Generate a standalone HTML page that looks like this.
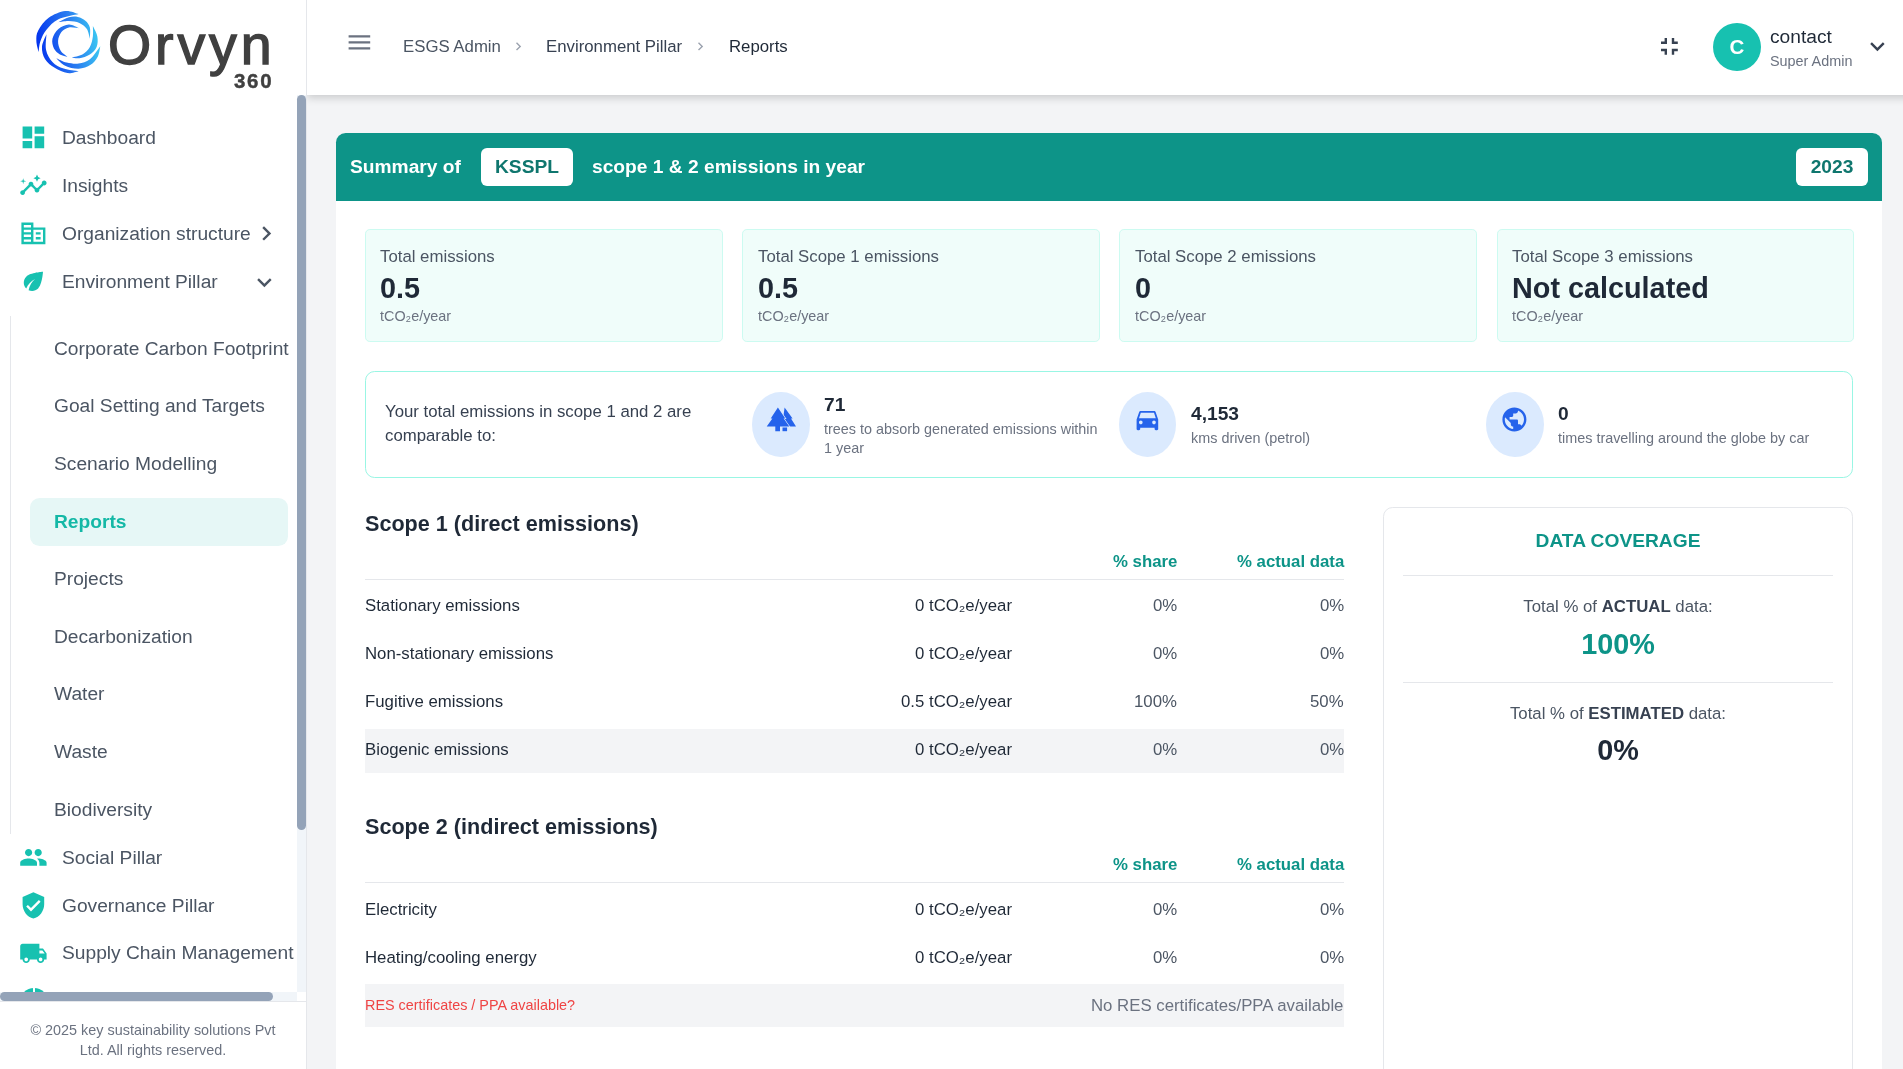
<!DOCTYPE html>
<html><head><meta charset="utf-8"><style>
html,body{margin:0;padding:0;width:1903px;height:1069px;overflow:hidden;background:#f3f4f6;font-family:"Liberation Sans", sans-serif;}
.t{position:absolute;line-height:1;white-space:nowrap;will-change:transform;}
.r{position:absolute;}
b{font-weight:bold;color:#374151;}
</style></head><body>
<div class="r" style="left:336.00px;top:133.00px;width:1546.00px;height:946.00px;background:#fff;border-radius:9.6px 9.6px 0 0;"></div>
<div class="r" style="left:336.00px;top:133.00px;width:1546.00px;height:68.00px;background:#0d9488;border-radius:9.6px 9.6px 0 0;"></div>
<div class="t" style="left:349.50px;top:157.40px;font-size:19.2px;color:#fff;font-weight:bold;">Summary of</div>
<div class="r" style="left:481.00px;top:148.00px;width:92.00px;height:38.00px;background:#fff;border-radius:6px;"></div>
<div class="t" style="left:481.00px;width:92px;top:157.40px;font-size:19.2px;color:#0f766e;text-align:center;font-weight:bold;">KSSPL</div>
<div class="t" style="left:591.50px;top:157.40px;font-size:19.2px;color:#fff;font-weight:bold;">scope 1 &amp; 2 emissions in year</div>
<div class="r" style="left:1796.00px;top:148.00px;width:72.00px;height:38.00px;background:#fff;border-radius:6px;"></div>
<div class="t" style="left:1796.00px;width:72px;top:157.40px;font-size:19.2px;color:#0f766e;text-align:center;font-weight:bold;">2023</div>
<div class="r" style="left:365.00px;top:229.20px;width:357.60px;height:112.60px;background:#f0fdfa;border:1px solid #ccfbf1;border-radius:4.8px;box-sizing:border-box;"></div>
<div class="t" style="left:380.40px;top:248.60px;font-size:16.8px;color:#4b5563;">Total emissions</div>
<div class="t" style="left:380.40px;top:274.10px;font-size:28.8px;color:#1f2937;font-weight:bold;">0.5</div>
<div class="t" style="left:380.40px;top:309.30px;font-size:14.4px;color:#6b7280;">tCO₂e/year</div>
<div class="r" style="left:742.20px;top:229.20px;width:357.60px;height:112.60px;background:#f0fdfa;border:1px solid #ccfbf1;border-radius:4.8px;box-sizing:border-box;"></div>
<div class="t" style="left:757.60px;top:248.60px;font-size:16.8px;color:#4b5563;">Total Scope 1 emissions</div>
<div class="t" style="left:757.60px;top:274.10px;font-size:28.8px;color:#1f2937;font-weight:bold;">0.5</div>
<div class="t" style="left:757.60px;top:309.30px;font-size:14.4px;color:#6b7280;">tCO₂e/year</div>
<div class="r" style="left:1119.40px;top:229.20px;width:357.60px;height:112.60px;background:#f0fdfa;border:1px solid #ccfbf1;border-radius:4.8px;box-sizing:border-box;"></div>
<div class="t" style="left:1134.80px;top:248.60px;font-size:16.8px;color:#4b5563;">Total Scope 2 emissions</div>
<div class="t" style="left:1134.80px;top:274.10px;font-size:28.8px;color:#1f2937;font-weight:bold;">0</div>
<div class="t" style="left:1134.80px;top:309.30px;font-size:14.4px;color:#6b7280;">tCO₂e/year</div>
<div class="r" style="left:1496.60px;top:229.20px;width:357.60px;height:112.60px;background:#f0fdfa;border:1px solid #ccfbf1;border-radius:4.8px;box-sizing:border-box;"></div>
<div class="t" style="left:1512.00px;top:248.60px;font-size:16.8px;color:#4b5563;">Total Scope 3 emissions</div>
<div class="t" style="left:1512.00px;top:274.10px;font-size:28.8px;color:#1f2937;font-weight:bold;">Not calculated</div>
<div class="t" style="left:1512.00px;top:309.30px;font-size:14.4px;color:#6b7280;">tCO₂e/year</div>
<div class="r" style="left:365.00px;top:371.00px;width:1488.00px;height:106.50px;background:#fff;border:1px solid #99f6e4;border-radius:9.6px;box-sizing:border-box;"></div>
<div class="t" style="left:384.60px;top:403.60px;font-size:16.8px;color:#374151;">Your total emissions in scope 1 and 2 are</div>
<div class="t" style="left:384.60px;top:427.60px;font-size:16.8px;color:#374151;">comparable to:</div>
<div class="r" style="left:752.2px;top:391.8px;width:57.6px;height:65.2px;background:#dbeafe;border-radius:50%;"></div>
<svg class="r" style="left:766.6px;top:406.2px;width:28.8px;height:28.8px;overflow:visible" viewBox="0 0 28.8 28.8" fill="#2563eb"><path d="M17.6 1.6 L25.6 12.4 L24 12.4 L29 20.5 L15 20.5 Z"/><path d="M15.5 21.3 H20.1 V25.2 H15.5 Z"/><path stroke="#dbeafe" stroke-width="1.3" paint-order="stroke" d="M10.9 1.6 L18.3 12.4 L16.6 12.4 L22.3 20.5 L13 20.5 L13 25.2 L8.3 25.2 L8.3 20.5 L-0.3 20.5 L5.4 12.4 L3.7 12.4 Z"/></svg>
<div class="t" style="left:824.20px;top:395.40px;font-size:19.2px;color:#1f2937;font-weight:bold;">71</div>
<div class="t" style="left:824.20px;top:422.30px;font-size:14.4px;color:#6b7280;">trees to absorb generated emissions within</div>
<div class="t" style="left:824.20px;top:441.30px;font-size:14.4px;color:#6b7280;">1 year</div>
<div class="r" style="left:1118.8px;top:391.8px;width:57.6px;height:65.2px;background:#dbeafe;border-radius:50%;"></div>
<svg class="r" style="left:1133.20px;top:405.00px;width:28.8px;height:28.8px" viewBox="0 0 24 24" fill="#2563eb"><path d="M18.92 6.01C18.72 5.42 18.16 5 17.5 5h-11c-.66 0-1.21.42-1.42 1.01L3 12v8c0 .55.45 1 1 1h1c.55 0 1-.45 1-1v-1h12v1c0 .55.45 1 1 1h1c.55 0 1-.45 1-1v-8l-2.08-5.99zM6.5 16c-.83 0-1.5-.67-1.5-1.5S5.67 13 6.5 13s1.5.67 1.5 1.5S7.33 16 6.5 16zm11 0c-.83 0-1.5-.67-1.5-1.5s.67-1.5 1.5-1.5 1.5.67 1.5 1.5-.67 1.5-1.5 1.5zM5 11l1.5-4.5h11L19 11H5z"/></svg>
<div class="t" style="left:1190.80px;top:404.40px;font-size:19.2px;color:#1f2937;font-weight:bold;">4,153</div>
<div class="t" style="left:1190.80px;top:431.30px;font-size:14.4px;color:#6b7280;">kms driven (petrol)</div>
<div class="r" style="left:1486px;top:391.8px;width:57.6px;height:65.2px;background:#dbeafe;border-radius:50%;"></div>
<svg class="r" style="left:1500.40px;top:404.70px;width:28.8px;height:28.8px" viewBox="0 0 24 24" fill="#2563eb"><path d="M12 2C6.48 2 2 6.48 2 12s4.48 10 10 10 10-4.48 10-10S17.52 2 12 2zm-1 17.93c-3.95-.49-7-3.85-7-7.930 0-.62.08-1.21.21-1.79L9 15v1c0 1.1.9 2 2 2v1.93zm6.9-2.54c-.26-.81-1-1.39-1.9-1.39h-1v-3c0-.55-.45-1-1-1H8v-2h2c.55 0 1-.45 1-1V7h2c1.1 0 2-.9 2-2v-.41c2.93 1.19 5 4.06 5 7.41 0 2.080-.8 3.97-2.1 5.39z"/></svg>
<div class="t" style="left:1558.00px;top:404.40px;font-size:19.2px;color:#1f2937;font-weight:bold;">0</div>
<div class="t" style="left:1558.00px;top:431.30px;font-size:14.4px;color:#6b7280;">times travelling around the globe by car</div>
<div class="t" style="left:364.50px;top:513.20px;font-size:21.6px;color:#1f2937;font-weight:bold;">Scope 1 (direct emissions)</div>
<div class="t" style="right:725.60px;top:553.60px;font-size:16.8px;color:#0d9488;text-align:right;font-weight:bold;">% share</div>
<div class="t" style="right:559.20px;top:553.60px;font-size:16.8px;color:#0d9488;text-align:right;font-weight:bold;">% actual data</div>
<div class="r" style="left:365.00px;top:579.00px;width:979.00px;height:1.00px;background:#e5e7eb;"></div>
<div class="t" style="left:365.00px;top:597.60px;font-size:16.8px;color:#1f2937;">Stationary emissions</div>
<div class="t" style="right:891.50px;top:597.60px;font-size:16.8px;color:#1f2937;text-align:right;">0 tCO₂e/year</div>
<div class="t" style="right:725.60px;top:597.60px;font-size:16.8px;color:#4b5563;text-align:right;">0%</div>
<div class="t" style="right:559.20px;top:597.60px;font-size:16.8px;color:#4b5563;text-align:right;">0%</div>
<div class="t" style="left:365.00px;top:645.60px;font-size:16.8px;color:#1f2937;">Non-stationary emissions</div>
<div class="t" style="right:891.50px;top:645.60px;font-size:16.8px;color:#1f2937;text-align:right;">0 tCO₂e/year</div>
<div class="t" style="right:725.60px;top:645.60px;font-size:16.8px;color:#4b5563;text-align:right;">0%</div>
<div class="t" style="right:559.20px;top:645.60px;font-size:16.8px;color:#4b5563;text-align:right;">0%</div>
<div class="t" style="left:365.00px;top:693.60px;font-size:16.8px;color:#1f2937;">Fugitive emissions</div>
<div class="t" style="right:891.50px;top:693.60px;font-size:16.8px;color:#1f2937;text-align:right;">0.5 tCO₂e/year</div>
<div class="t" style="right:725.60px;top:693.60px;font-size:16.8px;color:#4b5563;text-align:right;">100%</div>
<div class="t" style="right:559.20px;top:693.60px;font-size:16.8px;color:#4b5563;text-align:right;">50%</div>
<div class="r" style="left:365.00px;top:729.40px;width:979.00px;height:43.20px;background:#f3f4f6;"></div>
<div class="t" style="left:365.00px;top:741.60px;font-size:16.8px;color:#1f2937;">Biogenic emissions</div>
<div class="t" style="right:891.50px;top:741.60px;font-size:16.8px;color:#1f2937;text-align:right;">0 tCO₂e/year</div>
<div class="t" style="right:725.60px;top:741.60px;font-size:16.8px;color:#4b5563;text-align:right;">0%</div>
<div class="t" style="right:559.20px;top:741.60px;font-size:16.8px;color:#4b5563;text-align:right;">0%</div>
<div class="t" style="left:364.50px;top:816.20px;font-size:21.6px;color:#1f2937;font-weight:bold;">Scope 2 (indirect emissions)</div>
<div class="t" style="right:725.60px;top:856.60px;font-size:16.8px;color:#0d9488;text-align:right;font-weight:bold;">% share</div>
<div class="t" style="right:559.20px;top:856.60px;font-size:16.8px;color:#0d9488;text-align:right;font-weight:bold;">% actual data</div>
<div class="r" style="left:365.00px;top:882.00px;width:979.00px;height:1.00px;background:#e5e7eb;"></div>
<div class="t" style="left:365.00px;top:901.60px;font-size:16.8px;color:#1f2937;">Electricity</div>
<div class="t" style="right:891.50px;top:901.60px;font-size:16.8px;color:#1f2937;text-align:right;">0 tCO₂e/year</div>
<div class="t" style="right:725.60px;top:901.60px;font-size:16.8px;color:#4b5563;text-align:right;">0%</div>
<div class="t" style="right:559.20px;top:901.60px;font-size:16.8px;color:#4b5563;text-align:right;">0%</div>
<div class="t" style="left:365.00px;top:949.60px;font-size:16.8px;color:#1f2937;">Heating/cooling energy</div>
<div class="t" style="right:891.50px;top:949.60px;font-size:16.8px;color:#1f2937;text-align:right;">0 tCO₂e/year</div>
<div class="t" style="right:725.60px;top:949.60px;font-size:16.8px;color:#4b5563;text-align:right;">0%</div>
<div class="t" style="right:559.20px;top:949.60px;font-size:16.8px;color:#4b5563;text-align:right;">0%</div>
<div class="r" style="left:365.00px;top:984.30px;width:979.00px;height:43.00px;background:#f3f4f6;"></div>
<div class="t" style="left:365.00px;top:998.30px;font-size:14.4px;color:#ef4444;">RES certificates / PPA available?</div>
<div class="t" style="right:559.20px;top:997.60px;font-size:16.8px;color:#6b7280;text-align:right;">No RES certificates/PPA available</div>
<div class="r" style="left:1383.20px;top:507.40px;width:469.80px;height:600.00px;background:#fff;border:1px solid #e5e7eb;border-radius:9.6px;box-sizing:border-box;"></div>
<div class="t" style="left:1418.20px;width:400px;top:531.40px;font-size:19.2px;color:#0d9488;text-align:center;font-weight:bold;">DATA COVERAGE</div>
<div class="r" style="left:1403.00px;top:575.10px;width:430.00px;height:1.00px;background:#e5e7eb;"></div>
<div class="t" style="left:1418.20px;width:400px;top:598.60px;font-size:16.8px;color:#4b5563;text-align:center;">Total % of <b>ACTUAL</b> data:</div>
<div class="t" style="left:1418.20px;width:400px;top:630.10px;font-size:28.8px;color:#0d9488;text-align:center;font-weight:bold;">100%</div>
<div class="r" style="left:1403.00px;top:681.80px;width:430.00px;height:1.00px;background:#e5e7eb;"></div>
<div class="t" style="left:1418.20px;width:400px;top:705.60px;font-size:16.8px;color:#4b5563;text-align:center;">Total % of <b>ESTIMATED</b> data:</div>
<div class="t" style="left:1418.20px;width:400px;top:736.10px;font-size:28.8px;color:#1f2937;text-align:center;font-weight:bold;">0%</div>
<div class="r" style="left:307.00px;top:0.00px;width:1620.00px;height:95.00px;background:#fff;box-shadow:0 3px 8px rgba(0,0,0,0.17);"></div>
<svg class="r" style="left:345.40px;top:27.80px;width:28.8px;height:28.8px" viewBox="0 0 24 24" fill="#6b7280"><path d="M3 18h18v-2H3v2zm0-5h18v-2H3v2zm0-7v2h18V6H3z"/></svg>
<div class="t" style="left:402.90px;top:38.60px;font-size:16.8px;color:#4b5563;">ESGS Admin</div>
<svg class="r" style="left:510.00px;top:38.10px;width:16.8px;height:16.8px" viewBox="0 0 24 24" fill="#9ca3af"><path d="M10 6L8.59 7.41 13.17 12l-4.58 4.59L10 18l6-6z"/></svg>
<div class="t" style="left:546.30px;top:38.60px;font-size:16.8px;color:#374151;">Environment Pillar</div>
<svg class="r" style="left:692.30px;top:38.10px;width:16.8px;height:16.8px" viewBox="0 0 24 24" fill="#9ca3af"><path d="M10 6L8.59 7.41 13.17 12l-4.58 4.59L10 18l6-6z"/></svg>
<div class="t" style="left:728.60px;top:38.60px;font-size:16.8px;color:#1f2937;">Reports</div>
<svg class="r" style="left:1655.20px;top:32.10px;width:28.8px;height:28.8px" viewBox="0 0 24 24" fill="#374151"><path d="M5 16h3v3h2v-5H5v2zm3-8H5v2h5V5H8v3zm6 11h2v-3h3v-2h-5v5zm2-11V5h-2v5h5V8h-3z"/></svg>
<div class="r" style="left:1713.00px;top:23.00px;width:48.00px;height:48.00px;background:#17c1b0;border-radius:50%;"></div>
<div class="t" style="left:1713.00px;width:48px;top:36.75px;font-size:20.5px;color:#fff;text-align:center;font-weight:bold;">C</div>
<div class="t" style="left:1770.00px;top:27.40px;font-size:19.2px;color:#1f2937;">contact</div>
<div class="t" style="left:1770.00px;top:54.30px;font-size:14.4px;color:#6b7280;">Super Admin</div>
<svg class="r" style="left:1862.70px;top:31.90px;width:28.8px;height:28.8px" viewBox="0 0 24 24" fill="#374151"><path d="M16.59 8.59L12 13.17 7.41 8.59 6 10l6 6 6-6z"/></svg>
<div class="r" style="left:0.00px;top:0.00px;width:306.00px;height:1069.00px;background:#fff;"></div>
<div class="r" style="left:306.00px;top:0.00px;width:1.00px;height:1069.00px;background:#e5e7eb;"></div>
<svg class="r" style="left:30px;top:5px;width:80px;height:80px" viewBox="0 0 1069 1069"><defs><linearGradient id="lg" gradientUnits="userSpaceOnUse" x1="120" y1="600" x2="940" y2="450"><stop offset="0" stop-color="#0435ee"/><stop offset="0.55" stop-color="#2a7df0"/><stop offset="1" stop-color="#3ccdf2"/></linearGradient></defs><g fill="url(#lg)"><path d="M650,120 C620,113 537,72 470,80 C403,88 310,127 250,170 C190,213 138,288 110,340 C82,392 84,432 85,480 C86,528 110,605 115,630 C119,605 122,530 140,480 C158,430 180,378 220,330 C260,282 308,225 380,190 C452,155 605,132 650,120Z"/><path d="M220,390 C210,418 163,505 160,560 C157,615 172,673 200,720 C228,767 280,808 330,840 C380,872 447,902 500,910 C553,918 625,889 650,885 C617,879 508,871 450,850 C392,829 339,802 300,760 C261,718 228,662 215,600 C202,538 219,425 220,390Z"/><path d="M940,550 C934,573 927,648 905,690 C883,732 852,773 810,800 C768,827 707,850 650,852 C593,854 520,836 470,812 C420,788 370,727 350,710 C373,720 440,756 490,768 C540,780 598,789 650,782 C702,775 752,764 800,725 C848,686 917,579 940,550Z"/><path d="M840,280 C850,303 892,373 900,420 C908,467 907,520 890,560 C873,600 838,635 800,660 C762,685 700,703 660,710 C620,717 577,702 560,700 C583,693 660,683 700,660 C740,637 777,600 800,560 C823,520 833,467 840,420 C847,373 840,303 840,280Z"/><path d="M380,230 C403,219 477,177 520,165 C563,153 603,152 640,160 C677,168 713,187 740,210 C767,233 790,260 800,300 C810,340 800,425 800,450 C793,428 783,355 760,320 C737,285 700,258 660,240 C620,222 567,217 520,215 C473,213 403,228 380,230Z"/><path d="M660,310 C637,302 567,258 520,260 C473,262 417,288 380,320 C343,352 310,407 300,450 C290,493 303,545 320,580 C337,615 370,642 400,660 C430,678 483,685 500,690 C485,677 431,645 410,610 C389,575 373,522 375,480 C377,438 396,390 420,360 C444,330 480,308 520,300 C560,292 637,308 660,310Z"/></g></svg>
<div class="t" style="left:107.80px;top:17.75px;font-size:55.5px;color:#404040;letter-spacing:3.9px;-webkit-text-stroke:1.4px #404040;">Orvyn</div>
<div class="t" style="left:233.50px;top:70.75px;font-size:20.5px;color:#404040;font-weight:bold;letter-spacing:1.7px;-webkit-text-stroke:0.4px #404040;">360</div>
<svg class="r" style="left:19.20px;top:123.00px;width:28.8px;height:28.8px" viewBox="0 0 24 24" fill="#17c1b0"><path d="M3 13h8V3H3v10zm0 8h8v-6H3v6zm10 0h8V11h-8v10zm0-18v6h8V3h-8z"/></svg>
<div class="t" style="left:62.00px;top:128.40px;font-size:19.2px;color:#4b5563;">Dashboard</div>
<svg class="r" style="left:19.20px;top:171.00px;width:28.8px;height:28.8px" viewBox="0 0 24 24" fill="#17c1b0"><path d="M21,8c-1.45,0-2.26,1.44-1.93,2.51l-3.55,3.56c-0.3-0.09-0.74-0.09-1.04,0l-2.55-2.55C12.27,10.45,11.46,9,10,9c-1.45,0-2.27,1.44-1.93,2.52l-4.56,4.55C2.44,15.74,1,16.55,1,18c0,1.1,0.9,2,2,2c1.45,0,2.26-1.44,1.93-2.51l4.55-4.56c0.3,0.09,0.74,0.09,1.04,0l2.55,2.55C12.73,16.55,13.54,18,15,18c1.45,0,2.27-1.44,1.93-2.52l3.56-3.55C21.56,12.26,23,11.45,23,10C23,8.9,22.1,8,21,8z M15,9l0.94-2.07L18,6l-2.06-0.93L15,3l-0.92,2.07L12,6l2.08,0.93L15,9z M3.5,11L4,9l2-0.5L4,8L3.5,6L3,8L1,8.5L3,9L3.5,11z"/></svg>
<div class="t" style="left:62.00px;top:176.40px;font-size:19.2px;color:#4b5563;">Insights</div>
<svg class="r" style="left:19.20px;top:219.00px;width:28.8px;height:28.8px" viewBox="0 0 24 24" fill="#17c1b0"><path d="M12,7V3H2v18h20V7H12z M10,19H4v-2h6V19z M10,15H4v-2h6V15z M10,11H4V9h6V11z M10,7H4V5h6V7z M20,19h-8V9h8V19z M18,11h-4v2h4V11z M18,15h-4v2h4V15z"/></svg>
<div class="t" style="left:62.00px;top:224.40px;font-size:19.2px;color:#4b5563;">Organization structure</div>
<svg class="r" style="left:19.20px;top:267.00px;width:28.8px;height:28.8px" viewBox="0 0 24 24" fill="#17c1b0"><path d="M6.05,8.05c-2.73,2.73-2.73,7.15-0.02,9.88c1.47-3.4,4.09-6.24,7.36-7.93c-2.77,2.34-4.71,5.61-5.39,9.32c2.6,1.23,5.8,0.78,7.95-1.37C19.43,14.47,20,4,20,4S9.53,4.57,6.05,8.05z"/></svg>
<div class="t" style="left:62.00px;top:272.40px;font-size:19.2px;color:#4b5563;">Environment Pillar</div>
<svg class="r" style="left:251.60px;top:219.30px;width:28.8px;height:28.8px" viewBox="0 0 24 24" fill="#4b5563"><path d="M10 6L8.59 7.41 13.17 12l-4.58 4.59L10 18l6-6z"/></svg>
<svg class="r" style="left:250.30px;top:268.30px;width:28.8px;height:28.8px" viewBox="0 0 24 24" fill="#4b5563"><path d="M16.59 8.59L12 13.17 7.41 8.59 6 10l6 6 6-6z"/></svg>
<div class="r" style="left:10.00px;top:316.00px;width:1.00px;height:517.70px;background:#e5e7eb;"></div>
<div class="t" style="left:53.50px;top:339.40px;font-size:19.2px;color:#4b5563;">Corporate Carbon Footprint</div>
<div class="t" style="left:53.50px;top:396.40px;font-size:19.2px;color:#4b5563;">Goal Setting and Targets</div>
<div class="t" style="left:53.50px;top:454.40px;font-size:19.2px;color:#4b5563;">Scenario Modelling</div>
<div class="r" style="left:30.00px;top:498.10px;width:258.00px;height:47.70px;background:#e6f7f6;border-radius:9.6px;"></div>
<div class="t" style="left:54.30px;top:512.40px;font-size:19.2px;color:#14b8a6;font-weight:bold;">Reports</div>
<div class="t" style="left:53.50px;top:569.40px;font-size:19.2px;color:#4b5563;">Projects</div>
<div class="t" style="left:53.50px;top:627.40px;font-size:19.2px;color:#4b5563;">Decarbonization</div>
<div class="t" style="left:53.50px;top:684.40px;font-size:19.2px;color:#4b5563;">Water</div>
<div class="t" style="left:53.50px;top:742.40px;font-size:19.2px;color:#4b5563;">Waste</div>
<div class="t" style="left:53.50px;top:800.40px;font-size:19.2px;color:#4b5563;">Biodiversity</div>
<svg class="r" style="left:19.20px;top:843.00px;width:28.8px;height:28.8px" viewBox="0 0 24 24" fill="#17c1b0"><path d="M16 11c1.66 0 2.99-1.34 2.99-3S17.66 5 16 5c-1.66 0-3 1.34-3 3s1.34 3 3 3zm-8 0c1.66 0 2.99-1.34 2.99-3S9.66 5 8 5C6.34 5 5 6.34 5 8s1.34 3 3 3zm0 2c-2.33 0-7 1.17-7 3.5V19h14v-2.5c0-2.33-4.67-3.5-7-3.5zm8 0c-.29 0-.62.02-.97.05 1.16.84 1.97 1.97 1.97 3.45V19h6v-2.5c0-2.33-4.67-3.5-7-3.5z"/></svg>
<div class="t" style="left:62.00px;top:848.40px;font-size:19.2px;color:#4b5563;">Social Pillar</div>
<svg class="r" style="left:19.20px;top:891.00px;width:28.8px;height:28.8px" viewBox="0 0 24 24" fill="#17c1b0"><path d="M12 1L3 5v6c0 5.55 3.84 10.74 9 12 5.16-1.26 9-6.45 9-12V5l-9-4zm-2 16l-4-4 1.41-1.41L10 14.17l6.59-6.59L18 9l-8 8z"/></svg>
<div class="t" style="left:62.00px;top:896.40px;font-size:19.2px;color:#4b5563;">Governance Pillar</div>
<svg class="r" style="left:19.20px;top:939.00px;width:28.8px;height:28.8px" viewBox="0 0 24 24" fill="#17c1b0"><path d="M20 8h-3V4H3c-1.1 0-2 .9-2 2v11h2c0 1.66 1.34 3 3 3s3-1.34 3-3h6c0 1.66 1.34 3 3 3s3-1.34 3-3h2v-5l-3-4zM6 18.5c-.83 0-1.5-.67-1.5-1.5s.67-1.5 1.5-1.5 1.5.67 1.5 1.5-.67 1.5-1.5 1.5zm13.5-9l1.96 2.5H17V9.5h2.5zm-1.5 9c-.83 0-1.5-.67-1.5-1.5s.67-1.5 1.5-1.5 1.5.67 1.5 1.5-.67 1.5-1.5 1.5z"/></svg>
<div class="t" style="left:62.00px;top:943.40px;font-size:19.2px;color:#4b5563;">Supply Chain Management</div>
<div class="r" style="left:19.6px;top:988px;width:28.8px;height:28.8px;border-radius:50%;background:#17c1b0;"></div>
<div class="r" style="left:33.40px;top:985.00px;width:1.40px;height:8.00px;background:#fff;"></div>
<div class="r" style="left:297.00px;top:95.00px;width:9.00px;height:906.00px;background:#f1f5f9;"></div>
<div class="r" style="left:297.00px;top:95.00px;width:9.00px;height:735.00px;background:#94a3b8;border-radius:4.5px;"></div>
<div class="r" style="left:0.00px;top:992.00px;width:297.00px;height:9.00px;background:#f1f5f9;"></div>
<div class="r" style="left:0.00px;top:992.00px;width:273.00px;height:9.00px;background:#94a3b8;border-radius:4.5px;"></div>
<div class="r" style="left:297.00px;top:992.00px;width:9.00px;height:9.00px;background:#fff;"></div>
<div class="r" style="left:0.00px;top:1001.00px;width:306.00px;height:68.00px;background:#fff;border-top:1px solid #e5e7eb;box-sizing:border-box;"></div>
<div class="t" style="left:3.00px;width:300px;top:1023.30px;font-size:14.4px;color:#6b7280;text-align:center;">© 2025 key sustainability solutions Pvt</div>
<div class="t" style="left:3.00px;width:300px;top:1043.30px;font-size:14.4px;color:#6b7280;text-align:center;">Ltd. All rights reserved.</div>
</body></html>
